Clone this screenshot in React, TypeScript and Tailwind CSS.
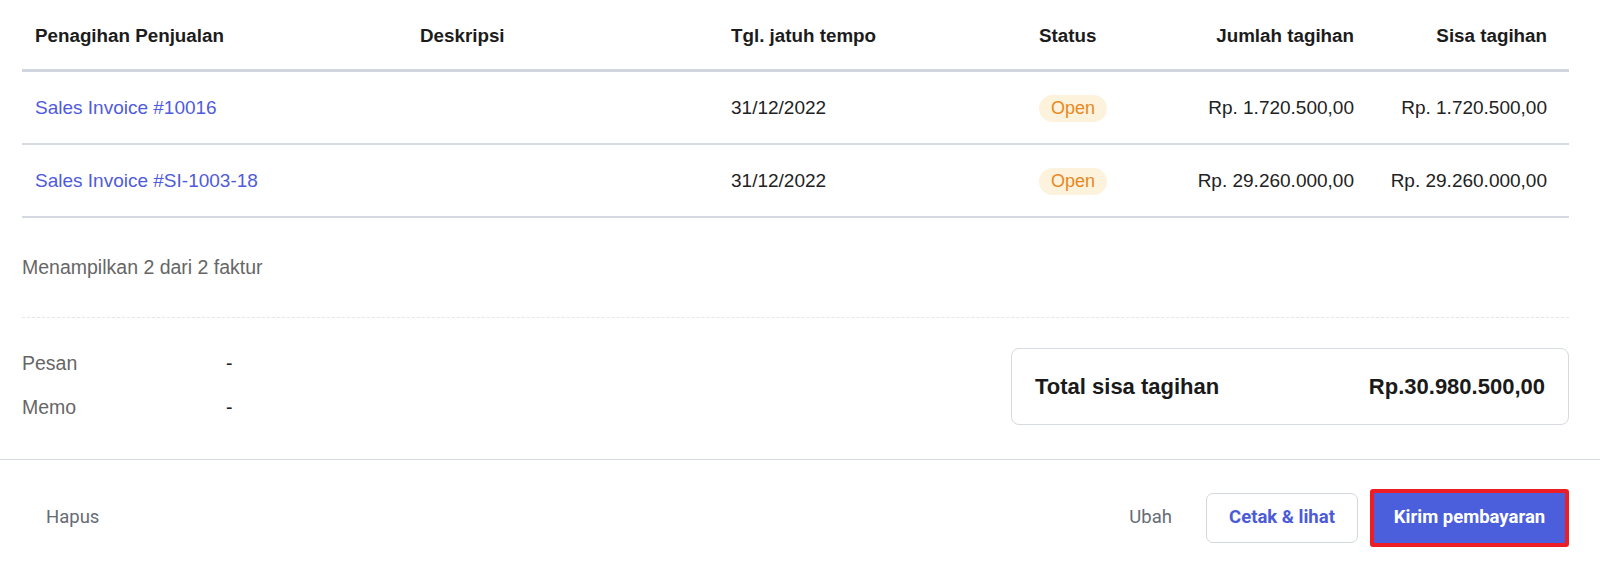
export default function App() {
  const rows = [
    { no: 'Sales Invoice #10016', due: '31/12/2022', status: 'Open', total: 'Rp. 1.720.500,00', rest: 'Rp. 1.720.500,00' },
    { no: 'Sales Invoice #SI-1003-18', due: '31/12/2022', status: 'Open', total: 'Rp. 29.260.000,00', rest: 'Rp. 29.260.000,00' },
  ];

  const cols = 'grid grid-cols-[385px_311px_308px_144px_197px_1fr]';

  return (
    <div className="w-full h-[566px] bg-white text-[#222] font-['Liberation_Sans',Arial,sans-serif] overflow-hidden">
      <div className="ml-[22px] mr-[31px]">
        {/* Table header */}
        <div className={`${cols} h-[72px] pt-[3px] items-center border-b-[3px] border-[#d1d6de] text-[18.8px] font-bold text-[#1c1c1c]`}>
          <div className="pl-[13px]">Penagihan Penjualan</div>
          <div className="pl-[13px]">Deskripsi</div>
          <div className="pl-[13px]">Tgl. jatuh tempo</div>
          <div className="pl-[13px]">Status</div>
          <div className="pr-[13px] text-right">Jumlah tagihan</div>
          <div className="pr-[22px] text-right">Sisa tagihan</div>
        </div>

        {/* Table rows */}
        {rows.map((row) => (
          <div key={row.no} className={`${cols} h-[73px] pt-[2px] items-center border-b-2 border-[#d5d9e0] text-[19px]`}>
            <div className="pl-[13px] text-[#4f5bdc]">{row.no}</div>
            <div className="pl-[13px]"></div>
            <div className="pl-[13px]">{row.due}</div>
            <div className="pl-[13px]">
              <span className="inline-flex h-[27px] items-center rounded-full bg-[#fdf2dc] px-[12px] text-[18px] text-[#e8881e]">
                {row.status}
              </span>
            </div>
            <div className="pr-[13px] text-right">{row.total}</div>
            <div className="pr-[22px] text-right">{row.rest}</div>
          </div>
        ))}

        <div className="h-[100px] flex items-center border-b border-dashed border-[#e3e6ea] text-[19.5px] text-[#666]">
          Menampilkan 2 dari 2 faktur
        </div>

        {/* Message / memo and total */}
        <div className="flex justify-between pt-[30px] pb-[34px]">
          <div className="pt-[5px] text-[19.5px]">
            <div className="flex h-[22px] items-center">
              <span className="w-[204px] text-[#666]">Pesan</span>
              <span>-</span>
            </div>
            <div className="mt-[22px] flex h-[22px] items-center">
              <span className="w-[204px] text-[#666]">Memo</span>
              <span>-</span>
            </div>
          </div>
          <div className="flex h-[77px] w-[558px] items-center justify-between rounded-[8px] border border-[#d6dae1] px-[23px] text-[22px] font-bold text-[#1a1a1a]">
            <span>Total sisa tagihan</span>
            <span>Rp.30.980.500,00</span>
          </div>
        </div>
      </div>

      {/* Footer actions */}
      <div className="border-t border-[#d5d9e0] h-[107px] pt-[10px] pl-[46px] pr-[31px] flex items-center justify-between font-['Roboto',Arial,sans-serif] text-[18.5px]">
        <button className="text-[#666c75]">Hapus</button>
        <div className="flex items-center">
          <button className="text-[#666c75] mr-[34px]">Ubah</button>
          <button className="h-[50px] w-[152px] rounded-[7px] border border-[#d3d7de] bg-white font-bold text-[#4c5bd8]">
            Cetak &amp; lihat
          </button>
          <button className="ml-[12px] h-[58px] w-[199px] rounded-[3px] border-[4px] border-[#ec1d25] bg-[#4b5fdc] font-bold text-white">
            Kirim pembayaran
          </button>
        </div>
      </div>
    </div>
  );
}
